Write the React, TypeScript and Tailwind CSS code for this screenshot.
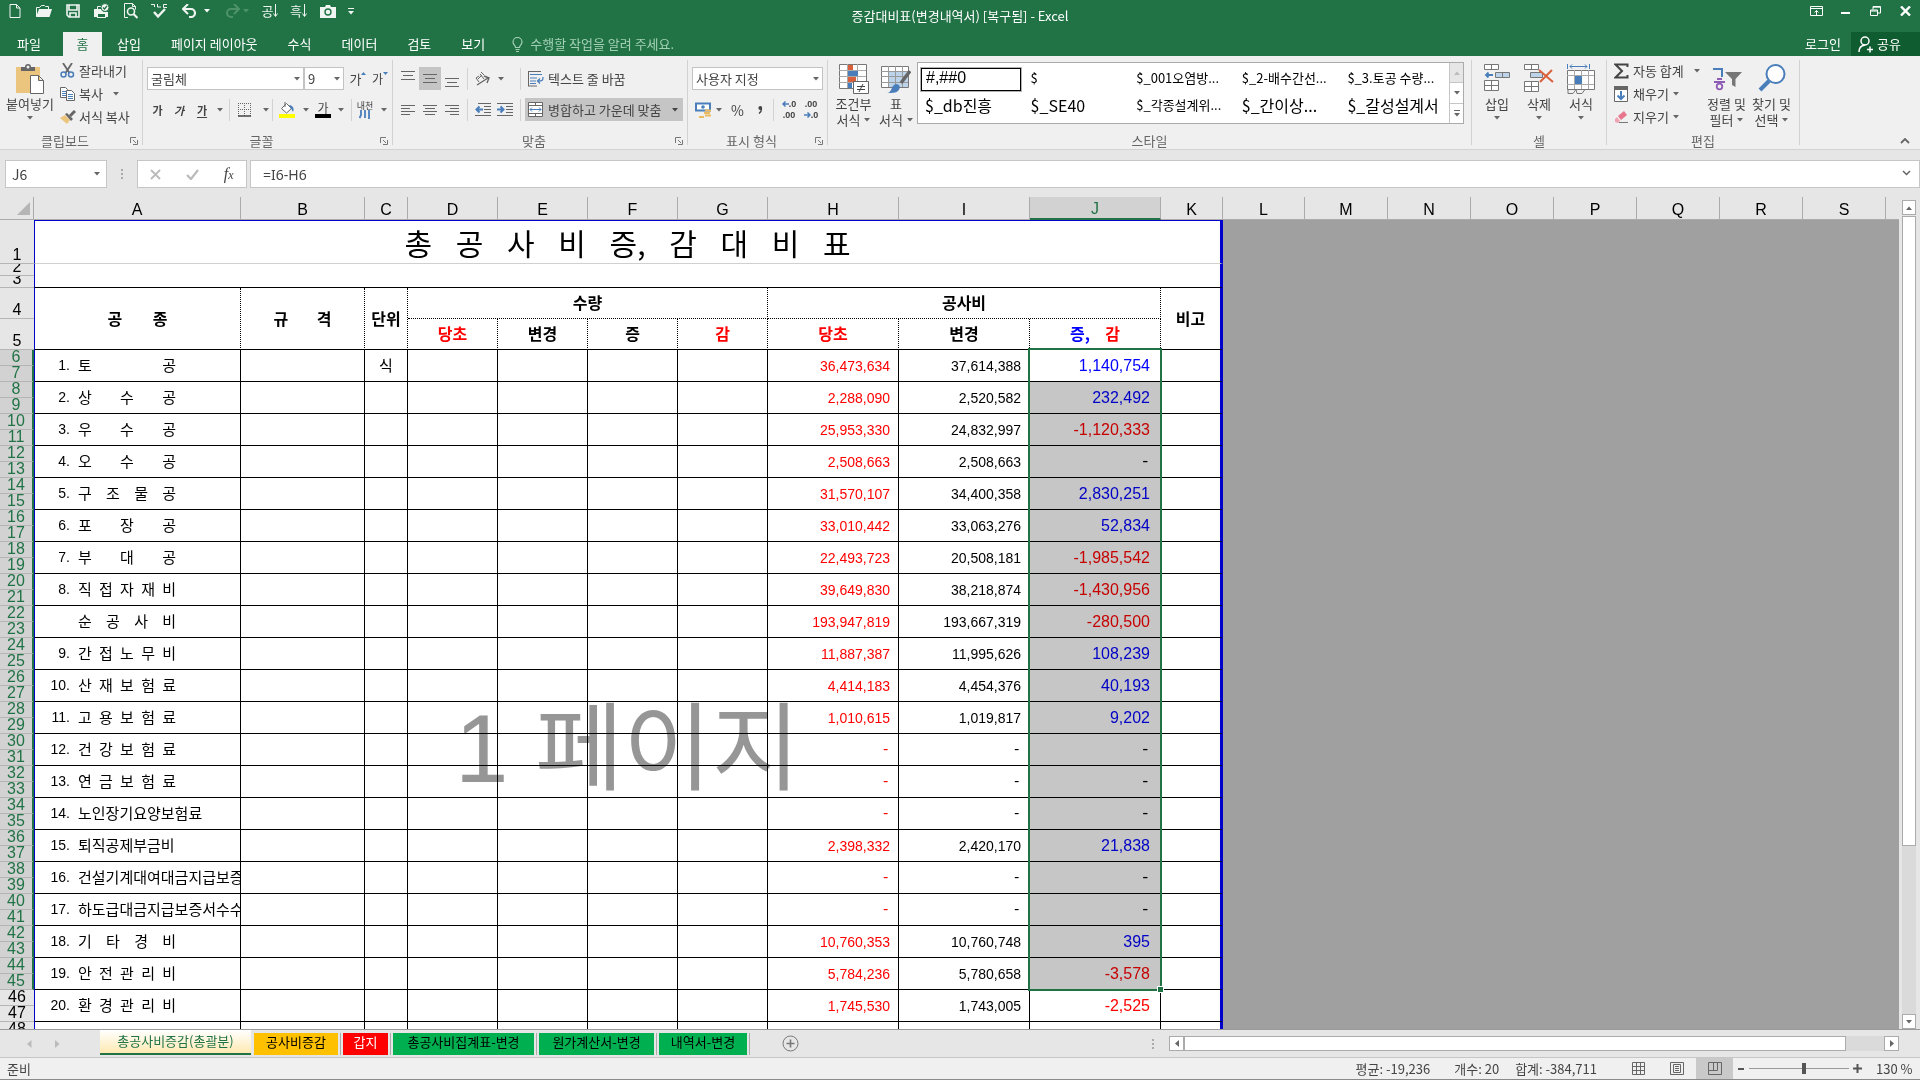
import type { ReactNode } from "react";

type Row = [no: string, name: string, before: string, after: string, diff: string];

const rows: Row[] = [
  ["1.", "토 공", "36,473,634", "37,614,388", "1,140,754"],
  ["2.", "상 수 공", "2,288,090", "2,520,582", "232,492"],
  ["3.", "우 수 공", "25,953,330", "24,832,997", "-1,120,333"],
  ["4.", "오 수 공", "2,508,663", "2,508,663", "-"],
  ["5.", "구 조 물 공", "31,570,107", "34,400,358", "2,830,251"],
  ["6.", "포 장 공", "33,010,442", "33,063,276", "52,834"],
  ["7.", "부 대 공", "22,493,723", "20,508,181", "-1,985,542"],
  ["8.", "직 접 자 재 비", "39,649,830", "38,218,874", "-1,430,956"],
  ["", "순 공 사 비", "193,947,819", "193,667,319", "-280,500"],
  ["9.", "간 접 노 무 비", "11,887,387", "11,995,626", "108,239"],
  ["10.", "산 재 보 험 료", "4,414,183", "4,454,376", "40,193"],
  ["11.", "고 용 보 험 료", "1,010,615", "1,019,817", "9,202"],
  ["12.", "건 강 보 험 료", "-", "-", "-"],
  ["13.", "연 금 보 험 료", "-", "-", "-"],
  ["14.", "노인장기요양보험료", "-", "-", "-"],
  ["15.", "퇴직공제부금비", "2,398,332", "2,420,170", "21,838"],
  ["16.", "건설기계대여대금지급보증", "-", "-", "-"],
  ["17.", "하도급대금지급보증서수수", "-", "-", "-"],
  ["18.", "기 타 경 비", "10,760,353", "10,760,748", "395"],
  ["19.", "안 전 관 리 비", "5,784,236", "5,780,658", "-3,578"],
  ["20.", "환 경 관 리 비", "1,745,530", "1,743,005", "-2,525"],
  ["", "", "", "", ""],
];

const columns = [
  { id: "A", w: "w-[207px]" },
  { id: "B", w: "w-[124px]" },
  { id: "C", w: "w-[43px]" },
  { id: "D", w: "w-[90px]" },
  { id: "E", w: "w-[90px]" },
  { id: "F", w: "w-[90px]" },
  { id: "G", w: "w-[90px]" },
  { id: "H", w: "w-[131px]" },
  { id: "I", w: "w-[131px]" },
  { id: "J", w: "w-[131px]" },
  { id: "K", w: "w-[62px]" },
  { id: "L", w: "w-[82px]" },
  { id: "M", w: "w-[83px]" },
  { id: "N", w: "w-[83px]" },
  { id: "O", w: "w-[83px]" },
  { id: "P", w: "w-[83px]" },
  { id: "Q", w: "w-[83px]" },
  { id: "R", w: "w-[83px]" },
  { id: "S", w: "w-[83px]" },
];

const styleCells = [
  { name: "#,##0", cls: "text-base font-['Liberation_Sans','Noto_Sans_CJK_KR',sans-serif]" },
  { name: "$", cls: "text-[13px]" },
  { name: "$_001오염방...", cls: "text-[13px]" },
  { name: "$_2-배수간선...", cls: "text-[13px]" },
  { name: "$_3.토공 수량...", cls: "text-[13px]" },
  { name: "$_db진흥", cls: "text-base" },
  { name: "$_SE40", cls: "text-base" },
  { name: "$_각종설계위...", cls: "text-[13px]" },
  { name: "$_간이상...", cls: "text-base" },
  { name: "$_갈성설계서", cls: "text-base" },
];

const sheetTabs = [
  { name: "공사비증감", cls: "bg-[#ffc000] text-black w-[84px]" },
  { name: "갑지", cls: "bg-[#ff0000] text-white w-[45px]" },
  { name: "총공사비집계표-변경", cls: "bg-[#00b050] text-black w-[141px]" },
  { name: "원가계산서-변경", cls: "bg-[#00b050] text-black w-[115px]" },
  { name: "내역서-변경", cls: "bg-[#00b050] text-black w-[88px]" },
];

/* ---------- small pieces ---------- */

function Caret({ className = "text-[#666]" }: { className?: string }) {
  return (
    <svg width="6" height="4" viewBox="0 0 6 4" className={`shrink-0 ${className}`}>
      <path d="M0 0h6L3 3.5z" fill="currentColor" />
    </svg>
  );
}

function Svg({ w = 16, h = 16, children }: { w?: number; h?: number; children: ReactNode }) {
  return (
    <svg width={w} height={h} viewBox={`0 0 ${w} ${h}`} fill="none" stroke="currentColor" className="shrink-0">
      {children}
    </svg>
  );
}

function Sep() {
  return <span className="h-[22px] w-px shrink-0 bg-[#d2d2d2]" />;
}

function IconButton({ label, className = "w-[22px]", children }: { label: string; className?: string; children: ReactNode }) {
  return (
    <button aria-label={label} className={`flex h-[23px] shrink-0 items-center justify-center ${className}`}>
      {children}
    </button>
  );
}

function Group({ label, launcher, className, children }: { label: string; launcher?: boolean; className: string; children: ReactNode }) {
  return (
    <>
      <section className={`flex shrink-0 flex-col ${className}`}>
        <div className="flex h-[76px]">{children}</div>
        <div className="flex h-[17px] items-center text-[#666]">
          <span className="flex-1 text-center">{label}</span>
          {launcher && (
            <button aria-label={`${label} 설정`} className="mr-1">
              <Svg w={8} h={8}>
                <path d="M.5 6V.5H6M3 3l3 3M7.5 3v4.5H3" stroke="#777" />
              </Svg>
            </button>
          )}
        </div>
      </section>
      <span className="my-1 w-px shrink-0 bg-[#d2d2d2]" />
    </>
  );
}

function SmallButton({ icon, text, caret }: { icon: ReactNode; text: string; caret?: string }) {
  return (
    <button className="flex h-[23px] items-center whitespace-nowrap">
      <span className="flex w-[19px]">{icon}</span>
      {text}
      {caret && <span className={caret}><Caret /></span>}
    </button>
  );
}

function BigButton({ icon, lines, className }: { icon: ReactNode; lines: string[]; className: string }) {
  return (
    <button className={`flex flex-col items-center pt-2 leading-4 ${className}`}>
      <span className="flex h-8 items-start">{icon}</span>
      <span className="whitespace-nowrap">{lines[0]}</span>
      {lines[1] ? (
        <span className="flex items-center gap-1 whitespace-nowrap">
          {lines[1]}
          <Caret />
        </span>
      ) : (
        <span className="pt-1"><Caret /></span>
      )}
    </button>
  );
}

function Combo({ label, value, className }: { label: string; value: string; className: string }) {
  return (
    <div className={`relative h-[23px] ${className}`}>
      <select aria-label={label} className="h-full w-full appearance-none border border-[#c3c3c3] bg-white pl-[3px] text-[#444]">
        <option>{value}</option>
      </select>
      <span className="pointer-events-none absolute top-[10px] right-1"><Caret /></span>
    </div>
  );
}

function Lines({ widths, y }: { widths: number[]; y: number }) {
  return (
    <Svg w={14} h={16}>
      {widths.map((w, i) => (
        <path key={i} d={`M${(14 - w) / 2} ${y + i * 4 + 0.5}h${w}`} stroke="#666" />
      ))}
    </Svg>
  );
}

/* ---------- title bar ---------- */

function QuickAccess() {
  return (
    <div className="flex h-[22px] flex-1 items-center text-[#f0f5f2]">
      <IconButton label="새로 만들기" className="w-[29px]">
        <Svg w={12} h={14}><path d="M1 .5h6.5L11 4v9.5H1zM7.5.5V4H11" /></Svg>
      </IconButton>
      <IconButton label="열기" className="w-[29px]">
        <Svg w={17} h={14}>
          <path d="M1.5 12.5v-9h3l2-2h3l1 1h3v3" />
          <path d="M1 13l3-8h13l-2.5 8z" fill="currentColor" stroke="none" />
        </Svg>
      </IconButton>
      <IconButton label="저장" className="w-[29px]">
        <Svg w={14} h={14}>
          <path d="M1 1h12v12H3l-2-2z" strokeWidth="1.6" />
          <path d="M3 1v5h8V1M4 13V9h6v4" strokeWidth="1.6" />
        </Svg>
      </IconButton>
      <IconButton label="빠른 인쇄" className="w-[29px]">
        <Svg w={17} h={16}>
          <path d="M1 6h9v3h5v5h-2v1H4v-1H1z" fill="currentColor" stroke="none" />
          <path d="M5 11h7v3H5z" fill="#217346" stroke="none" />
          <path d="M4.5 6V3.5H8" />
          <circle cx="12" cy="4.5" r="4" fill="currentColor" stroke="#217346" />
          <path d="M10 4.5L11.5 6 14 3" stroke="#217346" strokeWidth="1.3" />
        </Svg>
      </IconButton>
      <IconButton label="인쇄 미리 보기" className="w-[29px]">
        <Svg w={15} h={16}>
          <path d="M5 14.5H1.5v-14h8l3 3v3M9.5.5v3h3" />
          <circle cx="8" cy="8.5" r="3.5" strokeWidth="1.6" />
          <path d="M10.5 11l4 4" strokeWidth="2.2" />
        </Svg>
      </IconButton>
      <IconButton label="맞춤법 검사" className="w-[29px]">
        <Svg w={17} h={16}>
          <path d="M0 1.5h3.5V4M6.5 1v3H10M16 1.5h-3.5v3H16" />
          <path d="M3 9l4 4.5L14 6" strokeWidth="2.4" />
        </Svg>
      </IconButton>
      <IconButton label="실행 취소" className="w-[30px]">
        <Svg w={15} h={14}>
          <path d="M2 5h7a4 4 0 010 8H7" strokeWidth="2.2" />
          <path d="M6 0L1 5l5 5" strokeWidth="2" />
        </Svg>
      </IconButton>
      <Caret className="mr-[11px] text-white" />
      <IconButton label="다시 실행" className="w-[22px] text-[#4d9269]">
        <Svg w={15} h={14}>
          <path d="M13 5H6a4 4 0 000 8h2" strokeWidth="2" />
          <path d="M9 0l5 5-5 5" strokeWidth="2" />
        </Svg>
      </IconButton>
      <Caret className="mr-[7px] text-[#4d9269]" />
      <IconButton label="오름차순 정렬" className="w-[28px]">
        공
        <Svg w={5} h={14}><path d="M2.5 0v12M.5 9.5l2 3 2-3" /></Svg>
      </IconButton>
      <IconButton label="내림차순 정렬" className="w-[29px]">
        흑
        <Svg w={5} h={14}><path d="M2.5 0v12M.5 9.5l2 3 2-3" /></Svg>
      </IconButton>
      <IconButton label="카메라" className="w-[29px]">
        <Svg w={16} h={13}>
          <path d="M0 2h5l1-2h4l1 2h5v11H0z" fill="currentColor" stroke="none" />
          <circle cx="8" cy="7" r="3" stroke="#217346" strokeWidth="1.4" />
        </Svg>
      </IconButton>
      <IconButton label="빠른 실행 도구 모음 사용자 지정" className="w-[17px]">
        <Svg w={6} h={7}><path d="M0 .5h6" /><path d="M0 3h6L3 6.5z" fill="currentColor" stroke="none" /></Svg>
      </IconButton>
    </div>
  );
}

function TitleBar() {
  return (
    <header className="bg-[#217346] text-white">
      <div className="flex h-8 items-start">
        <QuickAccess />
        <h1 className="h-8 leading-8">증감대비표(변경내역서) [복구됨] - Excel</h1>
        <div className="flex h-[22px] flex-1 items-center justify-end">
          <IconButton label="리본 메뉴 표시 옵션" className="w-[29px]">
            <Svg w={13} h={10}><path d="M.5.5h12v9H.5zM.5 2.5h12M6.5 9V4.5M4.5 6.5l2-2 2 2" /></Svg>
          </IconButton>
          <IconButton label="최소화" className="w-[29px]">
            <Svg w={10} h={10}><path d="M0 7h9" strokeWidth="2" /></Svg>
          </IconButton>
          <IconButton label="이전 크기로 복원" className="w-[30px]">
            <Svg w={11} h={10}><path d="M.5 4h7v5.5h-7zM.5 5h7M3 3.5v-3h7.5V7H8M3 1.2h7.5" /></Svg>
          </IconButton>
          <IconButton label="닫기" className="w-[30px]">
            <Svg w={11} h={10}><path d="M1 .5l9 9M10 .5l-9 9" strokeWidth="2.4" /></Svg>
          </IconButton>
        </div>
      </div>
      <nav className="flex h-6 items-stretch">
        <button className="mr-[5px] w-[58px]">파일</button>
        <button className="w-[39px] bg-[#f0f0f0] text-[#217346]">홈</button>
        {["삽입", "페이지 레이아웃", "수식", "데이터", "검토", "보기"].map((t) => (
          <button key={t} className="px-[15px]">{t}</button>
        ))}
        <label className="ml-3 flex items-center gap-[7px] text-[#a3d0b5]">
          <Svg w={11} h={15}>
            <path d="M3.5 10.5c0-2-2.5-2.7-2.5-5.5a4.5 4.5 0 019 0c0 2.8-2.5 3.5-2.5 5.5zM3.5 12.5h4M4 14.5h3" strokeWidth="1.2" />
          </Svg>
          <input aria-label="설명" placeholder="수행할 작업을 알려 주세요." className="w-[200px] bg-transparent placeholder:text-[#a3d0b5]" />
        </label>
        <div className="flex-1" />
        <button className="px-[10px]">로그인</button>
        <button className="flex w-[69px] items-center gap-1 bg-[#0e5c2f] pl-[7px]">
          <Svg w={15} h={17}>
            <circle cx="7" cy="5" r="4" strokeWidth="1.5" />
            <path d="M1 16c0-4 2-6.5 6-7M9 13.5h6M12 10.5v6" strokeWidth="1.5" />
          </Svg>
          공유
        </button>
      </nav>
    </header>
  );
}

/* ---------- ribbon ---------- */

function ClipboardGroup() {
  return (
    <Group label="클립보드" launcher className="w-[142px]">
      <BigButton
        className="w-[60px]"
        lines={["붙여넣기"]}
        icon={
          <Svg w={28} h={30}>
            <path d="M0 3h24v26H0z" fill="#ebc57d" stroke="none" />
            <path d="M5 7V3h4a3 3 0 016 0h4v4z" fill="#666" stroke="none" />
            <circle cx="12" cy="3" r="1.5" fill="#f0f0f0" stroke="none" />
            <path d="M14.5 11.5h8l5 5v13h-13zM22.5 11.5v5h5" fill="#fff" stroke="#666" />
          </Svg>
        }
      />
      <div className="flex flex-col pt-[3px]">
        <SmallButton
          text="잘라내기"
          icon={
            <Svg w={15} h={15}>
              <path d="M3 0l6.5 10M12 0L5.5 10" stroke="#666" strokeWidth="1.8" />
              <circle cx="3.5" cy="11.5" r="2.5" stroke="#4a7ebb" strokeWidth="1.5" />
              <circle cx="11" cy="11.5" r="2.5" stroke="#4a7ebb" strokeWidth="1.5" />
            </Svg>
          }
        />
        <SmallButton
          text="복사"
          caret="ml-[10px]"
          icon={
            <Svg w={15} h={14}>
              <path d="M.5.5h5l2 2v8h-7z" fill="#fff" stroke="#666" />
              <path d="M2 4.5h4M2 6.5h4M2 8.5h4" stroke="#4a7ebb" />
              <path d="M6.5 3.5h5l3 3v7h-8z" fill="#fff" stroke="#666" />
              <path d="M8 7.5h5M8 9.5h5M8 11.5h5" stroke="#4a7ebb" />
            </Svg>
          }
        />
        <SmallButton
          text="서식 복사"
          icon={
            <Svg w={16} h={14}>
              <path d="M0 8l5-3 5 5-3 4z" fill="#ebc57d" stroke="none" />
              <path d="M5 4l2-1 6 6-2 2z" fill="#666" stroke="none" />
              <path d="M10 6l5-5" stroke="#666" strokeWidth="3" />
            </Svg>
          }
        />
      </div>
    </Group>
  );
}

function FontGroup() {
  return (
    <Group label="글꼴" launcher className="w-[249px]">
      <div className="flex flex-col gap-2 pt-[11px] pl-1">
        <div className="flex items-center">
          <Combo label="글꼴" value="굴림체" className="w-[157px]" />
          <Combo label="글꼴 크기" value="9" className="w-[40px]" />
          <IconButton label="글꼴 크기 크게" className="ml-[3px] w-[22px] text-[13px] text-[#444]">
            가<Svg w={5} h={20}><path d="M0 6h5L2.5 3z" fill="#4a7ebb" stroke="none" /></Svg>
          </IconButton>
          <IconButton label="글꼴 크기 작게" className="w-[22px] text-xs text-[#444]">
            가<Svg w={5} h={20}><path d="M0 3h5L2.5 6z" fill="#4a7ebb" stroke="none" /></Svg>
          </IconButton>
        </div>
        <div className="flex items-center text-[#444]">
          <IconButton label="굵게" className="w-[21px] text-[11px] font-bold">가</IconButton>
          <IconButton label="기울임꼴" className="w-[22px] text-[11px] font-bold italic">가</IconButton>
          <IconButton label="밑줄" className="w-[24px] text-[11px] font-bold underline underline-offset-2">가</IconButton>
          <IconButton label="밑줄 종류" className="w-[12px]"><Caret /></IconButton>
          <span className="w-[3px]" />
          <Sep />
          <IconButton label="테두리" className="w-[29px]">
            <Svg w={14} h={14}>
              <path d="M.5 0v13M6.5 0v13M12.5 0v13M0 .5h13M0 6.5h13" stroke="#666" strokeDasharray="1 1" />
              <path d="M0 13h13" stroke="#444" strokeWidth="1.5" />
            </Svg>
          </IconButton>
          <IconButton label="테두리 종류" className="w-[13px]"><Caret /></IconButton>
          <Sep />
          <IconButton label="채우기 색" className="w-[28px]">
            <Svg w={16} h={16}>
              <path d="M2.5 6.5l5-5 5 5-5 4.5z" fill="#fff" stroke="#666" />
              <path d="M6 0v5" stroke="#666" />
              <path d="M10 3c3 0 6 3 4 7-1-1-1-3-2-3z" fill="#4a7ebb" stroke="none" />
              <path d="M0 12h16v4H0z" fill="#ffff00" stroke="none" />
            </Svg>
          </IconButton>
          <IconButton label="채우기 색 선택" className="w-[10px]"><Caret /></IconButton>
          <IconButton label="글꼴 색" className="w-[24px] flex-col text-xs leading-3">
            가<span className="h-1 w-4 bg-black" />
          </IconButton>
          <IconButton label="글꼴 색 선택" className="w-[11px]"><Caret /></IconButton>
          <span className="w-[5px]" />
          <Sep />
          <IconButton label="윗주 필드" className="w-[26px] flex-col text-[9px] leading-[9px]">
            내천
            <Svg w={12} h={9}><path d="M2 0v5L.5 8M6 0v8M10 0v9" stroke="#4a7ebb" strokeWidth="1.8" /></Svg>
          </IconButton>
          <IconButton label="윗주 필드 선택" className="w-[12px]"><Caret /></IconButton>
        </div>
      </div>
    </Group>
  );
}

function AlignGroup() {
  return (
    <Group label="맞춤" launcher className="w-[294px]">
      <div className="flex flex-col gap-2 pt-[11px] pl-1">
        <div className="flex items-center">
          <IconButton label="위쪽 맞춤"><Lines widths={[14, 10, 14]} y={0} /></IconButton>
          <IconButton label="가운데 맞춤" className="w-[22px] bg-[#c5c5c5]"><Lines widths={[14, 10, 14]} y={3} /></IconButton>
          <IconButton label="아래쪽 맞춤"><Lines widths={[14, 10, 14]} y={7} /></IconButton>
          <span className="w-1" />
          <Sep />
          <IconButton label="방향" className="w-[28px]">
            <Svg w={17} h={16}>
              <path d="M2 7l3 4M5 5L2 7M6 3l4 5M4 8l4-4M7 1l3 3" stroke="#666" />
              <path d="M3 14l11-7M10 5l5 2-2 5" stroke="#666" strokeWidth="1.4" />
            </Svg>
          </IconButton>
          <IconButton label="방향 선택" className="w-[10px]"><Caret /></IconButton>
          <span className="w-[14px]" />
          <Sep />
          <button className="flex items-center gap-1 pl-[7px] whitespace-nowrap">
            <Svg w={16} h={16}>
              <path d="M0 .5h13M.5 0v15M0 15h9" stroke="#666" />
              <path d="M2 3.5h12M2 7h7M2 10h6M2 12.5h6" stroke="#4a7ebb" />
              <path d="M15 6c0 4-1 4-5 4M12 7.5L9.5 10l2.5 2.5" stroke="#4a7ebb" strokeWidth="1.3" />
            </Svg>
            텍스트 줄 바꿈
          </button>
        </div>
        <div className="flex items-center">
          <IconButton label="왼쪽 맞춤"><Svg w={14}><path d="M0 3.5h14M0 6.5h9M0 9.5h14M0 12.5h9" stroke="#666" /></Svg></IconButton>
          <IconButton label="가운데 맞춤"><Svg w={14}><path d="M0 3.5h14M2 6.5h10M0 9.5h14M2 12.5h10" stroke="#666" /></Svg></IconButton>
          <IconButton label="오른쪽 맞춤"><Svg w={14}><path d="M0 3.5h14M5 6.5h9M0 9.5h14M5 12.5h9" stroke="#666" /></Svg></IconButton>
          <span className="w-1" />
          <Sep />
          <span className="w-1" />
          <IconButton label="내어쓰기">
            <Svg>
              <path d="M3 1.5h13M9 4.5h7M9 7.5h7M9 10.5h7M0 13.5h16" stroke="#666" />
              <path d="M8 7.5H2M4.5 4.5l-3 3 3 3" stroke="#4a7ebb" strokeWidth="2" />
            </Svg>
          </IconButton>
          <IconButton label="들여쓰기">
            <Svg>
              <path d="M0 1.5h16M9 4.5h7M9 7.5h7M9 10.5h7M0 13.5h16" stroke="#666" />
              <path d="M0 7.5h6M3.5 4.5l3 3-3 3" stroke="#4a7ebb" strokeWidth="2" />
            </Svg>
          </IconButton>
          <span className="w-1" />
          <Sep />
          <button className="ml-1 flex h-[23px] w-[158px] items-center gap-[5px] bg-[#c5c5c5] pl-[3px] whitespace-nowrap">
            <Svg w={15} h={15}>
              <path d="M.5.5h14v14H.5z" fill="#fff" stroke="#666" />
              <path d="M0 3.5h15M0 11.5h15M7.5 0v3.5M7.5 11.5V15" stroke="#666" />
              <path d="M2 7.5h11M4 5.5l-2 2 2 2M11 5.5l2 2-2 2" stroke="#4a7ebb" />
            </Svg>
            병합하고 가운데 맞춤
            <span className="pl-[6px]"><Caret className="text-[#444]" /></span>
          </button>
        </div>
      </div>
    </Group>
  );
}

function NumberGroup() {
  return (
    <Group label="표시 형식" launcher className="w-[139px]">
      <div className="flex flex-col gap-2 pt-[11px] pl-1">
        <Combo label="표시 형식" value="사용자 지정" className="w-[131px]" />
        <div className="flex items-center text-[#444]">
          <IconButton label="회계 표시 형식" className="w-[22px]">
            <Svg w={17}>
              <path d="M1 1.5h14v7H1z" fill="#fff" stroke="#4a7ebb" strokeWidth="2" />
              <circle cx="8" cy="5" r="1.8" fill="#4a7ebb" stroke="none" />
              <path d="M10 8.5h6M9 11h6M10 13.5h6M4 15h5" stroke="#ebb95e" strokeWidth="2" />
            </Svg>
          </IconButton>
          <IconButton label="회계 표시 형식 선택" className="w-[10px]"><Caret /></IconButton>
          <IconButton label="백분율 스타일" className="w-[27px] text-sm">%</IconButton>
          <IconButton label="쉼표 스타일" className="w-[18px]">
            <Svg w={5} h={8}><path d="M1 7.5C3 6 3.5 5 3.5 3" strokeWidth="1.4" /><circle cx="2.3" cy="2" r="1.9" fill="currentColor" stroke="none" /></Svg>
          </IconButton>
          <span className="w-1" />
          <Sep />
          <span className="w-1" />
          <IconButton label="자릿수 늘림" className="w-[22px] flex-col font-['Liberation_Sans',sans-serif] text-[9px] leading-[11px] font-bold">
            <span className="flex items-center"><Svg w={7} h={6}><path d="M7 3H1M3.5.5L1 3l2.5 2.5" stroke="#4a7ebb" strokeWidth="1.5" /></Svg>.0</span>
            <span>.00</span>
          </IconButton>
          <IconButton label="자릿수 줄임" className="w-[22px] flex-col font-['Liberation_Sans',sans-serif] text-[9px] leading-[11px] font-bold">
            <span>.00</span>
            <span className="flex items-center"><Svg w={7} h={6}><path d="M0 3h6M3.5.5L6 3 3.5 5.5" stroke="#4a7ebb" strokeWidth="1.5" /></Svg>.0</span>
          </IconButton>
        </div>
      </div>
    </Group>
  );
}

function StylesGroup() {
  return (
    <Group label="스타일" className="w-[643px]">
      <BigButton
        className="ml-1 w-[43px]"
        lines={["조건부", "서식"]}
        icon={
          <Svg w={30} h={30}>
            <path d="M.5.5h27v24H.5z" fill="#fff" stroke="#777" />
            <path d="M0 6.5h27M0 12.5h27M0 18.5h27M8.5 0v24M18.5 0v24" stroke="#aaa" />
            <path d="M9 1h5v5H9zM9 13h8v5H9z" fill="#d9603b" stroke="none" />
            <path d="M9 7h10v5H9zM9 19h4v5H9z" fill="#4a7ebb" stroke="none" />
            <path d="M14.5 17.5h15v12h-15z" fill="#fff" stroke="#666" />
            <path d="M18 22.5h8M18 25.5h8M24 20l-4 8" stroke="#444" />
          </Svg>
        }
      />
      <BigButton
        className="w-[42px]"
        lines={["표", "서식"]}
        icon={
          <Svg w={30} h={30}>
            <path d="M.5 2.5h27v21H.5z" fill="#fff" stroke="#777" />
            <path d="M7 7h20v16H7z" fill="#bcd3ea" stroke="none" />
            <path d="M0 7.5h27M0 12.5h27M0 18.5h27M7.5 2v21M14.5 2v21M21.5 2v21" stroke="#999" />
            <path d="M29 7l-9 12" stroke="#666" strokeWidth="3.5" />
            <path d="M6 29c5 0 4-8 9-9 4 0 5 4 2 7-2 2-6 2-11 2z" fill="#4a7ebb" stroke="none" />
          </Svg>
        }
      />
      <div className="mt-[6px] flex h-[62px] w-[547px] border border-[#ababab] bg-white text-black">
        <div className="grid flex-1 grid-cols-5 content-start gap-y-1 pt-[5px] pl-[3px]">
          {styleCells.map((s, i) => (
            <button
              key={s.name}
              className={`mr-[6px] flex h-[23px] items-center pb-1 pl-1 whitespace-nowrap ${s.cls} ${i === 0 ? "border border-black outline outline-black/30" : ""}`}
            >
              {s.name}
            </button>
          ))}
        </div>
        <div className="flex w-[14px] flex-col divide-y divide-[#c6c6c6] border-l border-[#c6c6c6]">
          <button aria-label="위로" className="flex flex-1 items-center justify-center bg-[#e6e6e6]"><Caret className="rotate-180 text-[#bbb]" /></button>
          <button aria-label="아래로" className="flex flex-1 items-center justify-center"><Caret /></button>
          <button aria-label="자세히" className="flex flex-1 flex-col items-center justify-center gap-[2px]">
            <span className="h-px w-[6px] bg-[#666]" />
            <Caret />
          </button>
        </div>
      </div>
    </Group>
  );
}

function CellsGroup() {
  return (
    <Group label="셀" className="w-[134px]">
      <BigButton
        className="ml-1 w-[42px]"
        lines={["삽입"]}
        icon={
          <Svg w={27} h={28}>
            <path d="M.5.5h14v5H.5zM7.5.5v5M.5 16.5h14v10H.5zM7.5 16.5v10M.5 21.5h14" fill="#fff" stroke="#777" />
            <path d="M11.5 8.5h14v5h-14zM18.5 8.5v5" fill="#bcd3ea" stroke="#777" />
            <path d="M9 11H2M4.5 8.5L2 11l2.5 2.5" stroke="#4a7ebb" strokeWidth="1.8" />
          </Svg>
        }
      />
      <BigButton
        className="w-[42px]"
        lines={["삭제"]}
        icon={
          <Svg w={30} h={28}>
            <path d="M.5.5h14v5H.5zM7.5.5v5M.5 17.5h14v10H.5zM7.5 17.5v10M.5 22.5h14" fill="#fff" stroke="#777" />
            <path d="M6.5 8.5h12v5h-12z" fill="#bcd3ea" stroke="#777" />
            <path d="M15 6l14 12M28 6L16 18" stroke="#d9603b" strokeWidth="2" />
          </Svg>
        }
      />
      <BigButton
        className="w-[42px]"
        lines={["서식"]}
        icon={
          <Svg w={29} h={30}>
            <path d="M.5 0v5M22.5 0v5M3 2.5h17M5 .5l-2 2 2 2M18 .5l2 2-2 2" stroke="#4a7ebb" />
            <path d="M.5 6.5h27v19H.5z" fill="#fff" stroke="#777" />
            <path d="M0 11.5h27M0 20.5h27M7.5 6v19M14.5 6v19M21.5 6v19" stroke="#aaa" />
            <path d="M8 12h7v8H8z" fill="#4a7ebb" stroke="none" />
            <path d="M1 25.5v4h5l3-4 1 4h5l3-4" stroke="#777" />
          </Svg>
        }
      />
    </Group>
  );
}

function EditGroup() {
  return (
    <Group label="편집" className="w-[192px]">
      <div className="flex w-[97px] flex-col pt-[3px] pl-[7px]">
        <SmallButton text="자동 합계" caret="ml-[10px]" icon={<Svg w={15}><path d="M13.5 4V1.5h-12L8 8l-6.5 6.5h12V12" stroke="#444" strokeWidth="2" /></Svg>} />
        <SmallButton
          text="채우기"
          caret="ml-1"
          icon={
            <Svg w={14}>
              <path d="M.5.5h13v15H.5z" fill="#fff" stroke="#666" />
              <path d="M0 0h14v4H0z" fill="#666" stroke="none" />
              <path d="M7 5v8M3.5 9.5L7 13l3.5-3.5" stroke="#4a7ebb" strokeWidth="2" />
            </Svg>
          }
        />
        <SmallButton
          text="지우기"
          caret="ml-1"
          icon={
            <Svg w={15} h={14}>
              <path d="M4 6l6-5 3 4-6 5z" fill="#e8758c" stroke="none" />
              <path d="M1 9l2-2 3 4-2 2-3-1z" fill="#f0a3b1" stroke="none" />
              <path d="M5 12.5h9" stroke="#777" />
            </Svg>
          }
        />
      </div>
      <BigButton
        className="w-[45px]"
        lines={["정렬 및", "필터"]}
        icon={
          <Svg w={30} h={28}>
            <path d="M1 5h9v8" stroke="#4a7ebb" strokeWidth="2" />
            <path d="M5 15h5M2 18h11" stroke="#8e5bb5" strokeWidth="1.8" />
            <circle cx="7.5" cy="22.5" r="2.8" stroke="#8e5bb5" strokeWidth="1.8" />
            <path d="M13 8h17l-6.5 7v8L20 21v-6z" fill="#777" stroke="none" />
          </Svg>
        }
      />
      <BigButton
        className="w-[45px]"
        lines={["찾기 및", "선택"]}
        icon={
          <Svg w={28} h={28}>
            <circle cx="17.5" cy="10" r="9" fill="#fff" stroke="#4a7ebb" strokeWidth="2" />
            <path d="M11 17l-9 9" stroke="#4a7ebb" strokeWidth="4" />
          </Svg>
        }
      />
    </Group>
  );
}

function Ribbon() {
  return (
    <div className="flex h-[94px] shrink-0 border-b border-[#d2d2d2] bg-[#f0f0f0] text-[#444]">
      <ClipboardGroup />
      <FontGroup />
      <AlignGroup />
      <NumberGroup />
      <StylesGroup />
      <CellsGroup />
      <EditGroup />
      <div className="flex flex-1 items-end justify-end pr-[10px] pb-[5px]">
        <button aria-label="리본 메뉴 축소">
          <Svg w={10} h={6}><path d="M1 5l4-4 4 4" stroke="#666" strokeWidth="1.8" /></Svg>
        </button>
      </div>
    </div>
  );
}

function FormulaBar() {
  return (
    <div className="flex h-[47px] shrink-0 bg-[#e6e6e6] pt-[10px] pl-[5px] text-sm text-[#444]">
      <div className="relative h-7 w-[102px]">
        <input aria-label="이름 상자" defaultValue="J6" className="h-full w-full border border-[#c6c6c6] bg-white pl-[6px]" />
        <span className="absolute top-3 right-[7px]"><Caret className="text-[#666]" /></span>
      </div>
      <div className="flex h-7 w-[30px] items-center justify-center">
        <Svg w={2} h={12}><path d="M1 1v2M1 5v2M1 9v2" stroke="#aaa" strokeWidth="2" /></Svg>
      </div>
      <div className="flex h-7 w-[110px] items-center justify-around border border-[#c6c6c6] bg-white">
        <button aria-label="취소"><Svg w={11} h={11}><path d="M1 1l9 9M10 1l-9 9" stroke="#bbb" strokeWidth="1.8" /></Svg></button>
        <button aria-label="입력"><Svg w={13} h={11}><path d="M1 6l4 4 7-9" stroke="#bbb" strokeWidth="2.2" /></Svg></button>
        <button aria-label="함수 삽입" className="font-['Liberation_Serif',serif] text-base italic">f<span className="text-xs">x</span></button>
      </div>
      <div className="relative ml-[3px] h-7 flex-1">
        <input aria-label="수식 입력줄" defaultValue="=I6-H6" className="h-full w-full border border-[#c6c6c6] bg-white pl-3 font-['Noto_Sans','Noto_Sans_CJK_KR',sans-serif]" />
        <span className="absolute top-[10px] right-[9px]">
          <Svg w={9} h={6}><path d="M1 1l3.5 3.5L8 1" stroke="#666" strokeWidth="1.5" /></Svg>
        </span>
      </div>
    </div>
  );
}

/* ---------- sheet ---------- */

function RowHead({ n, height = "h-4" }: { n: number; height?: string }) {
  const selected = n >= 6 && n <= 45;
  const thin = n === 2 || n === 3;
  return (
    <th
      scope="row"
      className={`${height} border-b border-b-[#b5b5b5] p-0 align-bottom font-normal ${
        selected ? "border-r-2 border-r-[#217346] bg-[#d2d2d2] text-[#217346]" : "bg-[#e6e6e6] text-black"
      }`}
    >
      <div className={`flex items-end justify-center pb-[2px] text-base leading-[13px] ${thin ? "h-[11px] overflow-hidden" : ""}`}>{n}</div>
    </th>
  );
}

const headCell = "border-black p-0 pb-[2px] text-center text-base leading-4 font-bold";

function SheetHead() {
  return (
    <>
      <tr>
        <RowHead n={1} height="h-11" />
        <td colSpan={11} className="border-t border-r-3 border-b border-l border-t-[#0000cc] border-r-[#0000cc] border-b-[#d0d0d0] border-l-[#0000cc] p-0">
          <div className="mx-auto w-[446px] text-3xl leading-9 [text-align-last:justify]">총 공 사 비 증, 감 대 비 표</div>
        </td>
        <td colSpan={9} rowSpan={49} className="bg-[#a0a0a0] p-0" />
      </tr>
      <tr>
        <RowHead n={2} height="h-3" />
        <td colSpan={11} rowSpan={2} className="border-r-3 border-b border-l border-r-[#0000cc] border-b-black border-l-[#0000cc] p-0" />
      </tr>
      <tr>
        <RowHead n={3} height="h-3" />
      </tr>
      <tr>
        <RowHead n={4} height="h-[31px]" />
        <th rowSpan={2} className={`${headCell} border-r border-b border-l border-l-[#0000cc] [border-right-style:dotted]`}>
          <div className="mx-auto w-[60px] [text-align-last:justify]">공 종</div>
        </th>
        <th rowSpan={2} className={`${headCell} border-r border-b [border-right-style:dotted]`}>
          <div className="mx-auto w-[58px] [text-align-last:justify]">규 격</div>
        </th>
        <th rowSpan={2} className={`${headCell} border-r border-b [border-right-style:dotted]`}>단위</th>
        <th colSpan={4} className={`${headCell} border-r border-b border-dotted`}>수량</th>
        <th colSpan={3} className={`${headCell} border-r border-b border-dotted`}>공사비</th>
        <th rowSpan={2} className={`${headCell} border-r-3 border-b border-r-[#0000cc]`}>비고</th>
      </tr>
      <tr>
        <RowHead n={5} height="h-[31px]" />
        {["당초", "변경", "증", "감", "당초", "변경"].map((t, i) => (
          <th key={i} className={`${headCell} border-r border-b [border-right-style:dotted] ${t === "당초" || t === "감" ? "text-[#ff0000]" : ""}`}>{t}</th>
        ))}
        <th className={`${headCell} border-r border-b text-[#0000ff] [border-right-style:dotted]`}>
          <div className="mx-auto w-[50px] [text-align-last:justify]">
            증, <span className="text-[#ff0000]">감</span>
          </div>
        </th>
      </tr>
    </>
  );
}

function Amount({ value, className }: { value: string; className: string }) {
  // a lone dash stands for zero and is drawn a full digit wide
  const font = value === "-" ? "font-['Liberation_Mono',monospace]" : "font-['Liberation_Sans',sans-serif]";
  return (
    <td rowSpan={2} className={`border-r border-b border-black p-0 text-right leading-4 ${font} ${className}`}>
      {value}
    </td>
  );
}

function DataRow({ row, index }: { row: Row; index: number }) {
  const [no, name, before, after, diff] = row;
  const n = 6 + index * 2;
  const spaced = name.includes(" ");
  const shade = index > 0 && index < 20 ? "bg-[#c6c6c6]" : "";
  const negative = diff.length > 1 && diff.startsWith("-");
  const tone = negative ? (shade ? "text-[#c60000]" : "text-[#ff0000]") : diff === "-" ? "text-black" : shade ? "text-[#0000c6]" : "text-[#0000ff]";

  return (
    <>
      <tr>
        <RowHead n={n} />
        <td rowSpan={2} className="border-r border-b border-l border-black border-l-[#0000cc] p-0 pb-px">
          <div className="flex overflow-hidden text-[15px] leading-5 whitespace-nowrap">
            <span className="mr-[8px] w-[35px] shrink-0 text-right font-['Liberation_Sans',sans-serif] text-sm leading-5">{no}</span>
            <span className={spaced ? "w-[98px] [text-align-last:justify]" : ""}>{name}</span>
          </div>
        </td>
        <td rowSpan={2} className="border-r border-b border-black p-0" />
        <td rowSpan={2} className="border-r border-b border-black p-0 pb-px text-center text-[15px] leading-4">{index === 0 ? "식" : ""}</td>
        <td rowSpan={2} className="border-r border-b border-black p-0" />
        <td rowSpan={2} className="border-r border-b border-black p-0" />
        <td rowSpan={2} className="border-r border-b border-black p-0" />
        <td rowSpan={2} className="border-r border-b border-black p-0" />
        <Amount value={before} className="pr-2 text-sm text-[#ff0000]" />
        <Amount value={after} className="pr-2 text-sm" />
        <Amount value={diff} className={`pr-[10px] text-base ${shade} ${tone}`} />
        <td rowSpan={2} className="border-r-3 border-b border-black border-r-[#0000cc] p-0" />
      </tr>
      <tr>
        <RowHead n={n + 1} />
      </tr>
    </>
  );
}

function Sheet() {
  return (
    <div className="relative min-w-0 flex-1 overflow-hidden bg-[#a0a0a0]">
      <table className="w-full table-fixed border-separate border-spacing-0 bg-white text-black">
        <colgroup>
          <col className="w-[34px]" />
          {columns.map((c) => (
            <col key={c.id} className={c.w} />
          ))}
          <col />
        </colgroup>
        <thead className="font-['Liberation_Sans',sans-serif]">
          <tr>
            <th className="h-[23px] border-r border-b border-[#ababab] bg-[#e6e6e6] p-0">
              <button aria-label="모두 선택" className="ml-auto block w-4">
                <Svg w={13} h={13}><path d="M13 0v13H0z" fill="#b5b5b5" stroke="none" /></Svg>
              </button>
            </th>
            {columns.map((c) => (
              <th
                key={c.id}
                scope="col"
                className={`h-[23px] p-0 align-bottom text-base leading-[18px] font-normal ${
                  c.id === "J"
                    ? "border-r border-b-2 border-r-[#ababab] border-b-[#217346] bg-[#d2d2d2] text-[#217346]"
                    : "border-r border-b border-[#ababab] bg-[#e6e6e6]"
                }`}
              >
                {c.id}
              </th>
            ))}
            <th className="h-[23px] border-b border-[#ababab] bg-[#e6e6e6] p-0" />
          </tr>
        </thead>
        <tbody className="[&_th[scope=row]]:font-['Liberation_Sans',sans-serif]">
          <SheetHead />
          {rows.map((r, i) => (
            <DataRow key={i} row={r} index={i} />
          ))}
        </tbody>
      </table>

      {/* page watermark, kept under the grid lines by the blend mode */}
      <div className="pointer-events-none absolute top-[482px] left-[34px] w-[1187px] text-center font-['Liberation_Sans','Noto_Sans_CJK_KR',sans-serif] text-8xl leading-[140px] text-[#969696] mix-blend-multiply">
        1 페이지
      </div>

      {/* selected range J6:J45 */}
      <div className="pointer-events-none absolute top-[151px] left-[1028px] h-[643px] w-[134px] border-2 border-[#217346]">
        <span className="absolute -right-1 -bottom-1 size-[7px] border border-white bg-[#217346]" />
      </div>
    </div>
  );
}

function VerticalScroll() {
  return (
    <div className="flex w-[21px] shrink-0 flex-col bg-[#e6e6e6] pt-[3px] pr-1 pl-[3px]">
      <button aria-label="위로 스크롤" className="flex h-[15px] w-[14px] items-center justify-center border border-[#ababab] bg-white"><Caret className="rotate-180 text-[#666]" /></button>
      <div className="mt-px w-[14px] flex-1 bg-[#dadada]">
        <div className="h-[79%] border border-[#ababab] bg-white" />
      </div>
      <button aria-label="아래로 스크롤" className="flex h-[15px] w-[14px] items-center justify-center border border-[#ababab] bg-white"><Caret /></button>
    </div>
  );
}

function SheetTabs() {
  return (
    <div className="flex h-[29px] shrink-0 items-center border-t border-b border-t-[#9a9a9a] border-b-[#c6c6c6] bg-[#e6e6e6] pr-[21px]">
      <div className="flex w-[100px] items-center gap-[23px] pl-[27px] text-[#bbb]">
        <Svg w={5} h={8}><path d="M4.5 0v8L0 4z" fill="currentColor" stroke="none" /></Svg>
        <Svg w={5} h={8}><path d="M0 0v8l4.5-4z" fill="currentColor" stroke="none" /></Svg>
      </div>
      <button className="mr-[3px] h-[25px] w-[151px] self-start border-b-2 border-[#217346] bg-linear-to-b from-white to-[#ffe9b0] pb-px text-[#217346]">
        총공사비증감(총괄분)
      </button>
      {sheetTabs.map((t) => (
        <div key={t.name} className="mr-[2px] flex items-center gap-[2px]">
          <button className={`h-[22px] pb-1 whitespace-nowrap ${t.cls}`}>{t.name}</button>
          <span className="h-[22px] w-px bg-[#ababab]" />
        </div>
      ))}
      <button aria-label="새 시트" className="ml-[30px]">
        <Svg w={17} h={17}><circle cx="8.5" cy="8.5" r="7.5" stroke="#777" /><path d="M4.5 8.5h8M8.5 4.5v8" stroke="#777" strokeWidth="1.6" /></Svg>
      </button>
      <div className="flex-1" />
      <Svg w={2} h={12}><path d="M1 1v2M1 5v2M1 9v2" stroke="#aaa" strokeWidth="2" /></Svg>
      <div className="ml-[15px] flex h-[15px] w-[730px]">
        <button aria-label="왼쪽으로 스크롤" className="flex w-[15px] items-center justify-center border border-[#ababab] bg-white">
          <Svg w={4} h={7}><path d="M4 0v7L0 3.5z" fill="#666" stroke="none" /></Svg>
        </button>
        <div className="flex-1 bg-[#dadada]"><div className="h-full w-[662px] border border-[#ababab] bg-white" /></div>
        <button aria-label="오른쪽으로 스크롤" className="flex w-[15px] items-center justify-center border border-[#ababab] bg-white">
          <Svg w={4} h={7}><path d="M0 0v7l4-3.5z" fill="#666" stroke="none" /></Svg>
        </button>
      </div>
    </div>
  );
}

function StatusBar() {
  return (
    <footer className="flex h-[22px] shrink-0 items-center border-b border-[#8a8a8a] bg-[#f0f0f0] pr-2 text-[#444]">
      <span className="flex-1 pl-[7px]">준비</span>
      <span>평균: -19,236</span>
      <span className="ml-6">개수: 20</span>
      <span className="mr-[23px] ml-4">합계: -384,711</span>
      <IconButton label="기본" className="w-[38px]">
        <Svg w={14} h={13}><path d="M.5.5h12v12H.5zM4.5.5v12M8.5.5v12M.5 4.5h12M.5 8.5h12" stroke="#666" /></Svg>
      </IconButton>
      <IconButton label="페이지 레이아웃" className="w-[38px]">
        <Svg w={14} h={13}><path d="M.5.5h13v12H.5zM3.5 2.5h7v8h-7zM5 4.5h4M5 6.5h4M5 8.5h4" stroke="#666" /></Svg>
      </IconButton>
      <button aria-label="페이지 나누기 미리 보기" className="flex h-full w-[37px] items-center justify-center bg-[#c9c9c9]">
        <Svg w={14} h={13}><path d="M.5.5h13v12H.5zM.5 8.5h9v-8M5.5.5v8" stroke="#666" /></Svg>
      </button>
      <button aria-label="축소" className="ml-[5px]"><Svg w={7} h={10}><path d="M0 5h6" stroke="#555" strokeWidth="2" /></Svg></button>
      <input
        type="range"
        aria-label="확대/축소"
        min={0}
        max={100}
        defaultValue={55}
        className="ml-1 h-[11px] w-[100px] appearance-none bg-[linear-gradient(#999,#999)] bg-[length:100%_1px] bg-center bg-no-repeat [&::-webkit-slider-thumb]:h-[11px] [&::-webkit-slider-thumb]:w-1 [&::-webkit-slider-thumb]:appearance-none [&::-webkit-slider-thumb]:bg-[#555]"
      />
      <button aria-label="확대" className="ml-1"><Svg w={9} h={9}><path d="M0 4.5h9M4.5 0v9" stroke="#555" strokeWidth="2" /></Svg></button>
      <span className="ml-[14px] w-9 whitespace-nowrap">130 %</span>
    </footer>
  );
}

export default function App() {
  return (
    <div className="flex h-screen flex-col overflow-hidden bg-[#e6e6e6] font-['Noto_Sans_CJK_KR',sans-serif] text-[13px] leading-4">
      <TitleBar />
      <Ribbon />
      <FormulaBar />
      <main className="flex min-h-0 flex-1">
        <Sheet />
        <VerticalScroll />
      </main>
      <SheetTabs />
      <StatusBar />
    </div>
  );
}
